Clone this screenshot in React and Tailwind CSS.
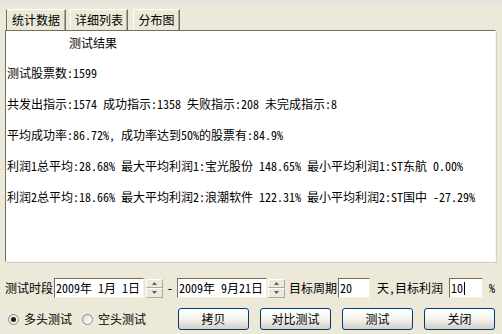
import React from "react";

const font = { fontFamily: '"Noto Sans Mono CJK SC", "Noto Sans CJK SC", monospace' };

const Tab = ({ label, active, w }) => (
  <div
    className={`h-[21px] ${w} shrink-0 flex items-center justify-center text-[12px] text-black bg-[#ece9d8] border border-t-white border-r-[#716f64] border-b-0 ${
      active ? "border-l-[#716f64]" : "border-l-white"
    } shadow-[inset_-1px_0_0_#aca899]`}
  >
    {label}
  </div>
);

const Spin = ({ ml }) => (
  <div className={`flex flex-col w-[17px] h-[19px] shrink-0 ${ml}`}>
    <div className="flex-1 flex items-center justify-center bg-[#ece9d8] border border-t-white border-l-white border-r-[#aca899] border-b-[#aca899]">
      <svg width="5" height="3" viewBox="0 0 5 3">
        <path d="M2.5 0 L5 3 L0 3 Z" fill="#4d6185" />
      </svg>
    </div>
    <div className="flex-1 flex items-center justify-center bg-[#ece9d8] border border-t-white border-l-white border-r-[#aca899] border-b-[#aca899]">
      <svg width="5" height="3" viewBox="0 0 5 3">
        <path d="M0 0 L5 0 L2.5 3 Z" fill="#4d6185" />
      </svg>
    </div>
  </div>
);

const Field = ({ w, children }) => (
  <div
    className={`${w} h-[20px] shrink-0 bg-white border border-t-[#716f64] border-l-[#716f64] border-r-[#f1efe2] border-b-[#f1efe2] flex items-center pl-[1px] text-[12px] leading-none whitespace-pre`}
  >
    {children}
  </div>
);

const Btn = ({ label }) => (
  <div className="w-[71px] h-[22px] shrink-0 rounded-[3px] border border-[#003c74] bg-gradient-to-b from-white via-[#f4f3ee] to-[#d6d0c5] flex items-center justify-center text-[12px] text-black">
    {label}
  </div>
);

const Radio = ({ checked }) => (
  <div className="w-[11px] h-[11px] shrink-0 rounded-full border border-[#8b8b86] bg-gradient-to-br from-[#dcdcd7] to-white flex items-center justify-center">
    {checked && <div className="w-[5px] h-[5px] rounded-full bg-[#1e1e1e]" />}
  </div>
);

const lines = [
  "测试股票数:1599",
  "共发出指示:1574 成功指示:1358 失败指示:208 未完成指示:8",
  "平均成功率:86.72%, 成功率达到50%的股票有:84.9%",
  "利润1总平均:28.68% 最大平均利润1:宝光股份 148.65% 最小平均利润1:ST东航 0.00%",
  "利润2总平均:18.66% 最大平均利润2:浪潮软件 122.31% 最小平均利润2:ST国中 -27.29%",
];

export default function App() {
  return (
    <div
      className="w-[502px] h-[334px] flex flex-col text-black overflow-hidden bg-gradient-to-b from-[#e3e3de] from-0% to-[#ece9d8] to-[3%]"
      style={font}
    >
      {/* tabs */}
      <div className="flex items-end pl-[6px] pt-[9px]">
        <Tab label="统计数据" active w="w-[60px]" />
        <div className="ml-[4px]">
          <Tab label="详细列表" w="w-[58px]" />
        </div>
        <div className="ml-[5px]">
          <Tab label="分布图" w="w-[47px]" />
        </div>
      </div>

      {/* result panel */}
      <div className="ml-[5px] w-[491px] h-[232px] bg-white border border-t-[#716f64] border-l-[#716f64] border-r-[#f8f7f0] border-b-[#f8f7f0] shadow-[1px_1px_0_#d4d0c8] pt-[5px] pl-[1px] text-[12px]">
        <div className="leading-[14px] h-[14px] mb-[16px] pl-[62px]">测试结果</div>
        {lines.map((l) => (
          <div key={l} className="leading-[14px] h-[14px] mb-[17px] whitespace-pre">
            {l}
          </div>
        ))}
      </div>

      {/* period row */}
      <div className="flex items-center h-[20px] mt-[16px] pl-[5px] text-[12px] whitespace-pre">
        <span className="shrink-0 mr-[1px]">测试时段</span>
        <Field w="w-[90px]">2009年 1月 1日</Field>
        <Spin ml="ml-[2px]" />
        <span className="shrink-0 ml-[4px] mr-[4px]">-</span>
        <Field w="w-[90px]">2009年 9月21日</Field>
        <Spin ml="ml-[1px]" />
        <span className="shrink-0 ml-[4px] mr-[1px]">目标周期</span>
        <Field w="w-[32px]">20</Field>
        <span className="shrink-0 ml-[7px] mr-[6px]">天,目标利润</span>
        <Field w="w-[34px]">
          10<span className="w-px h-[13px] bg-black ml-[1px]" />
        </Field>
        <span className="shrink-0 ml-[6px]">%</span>
      </div>

      {/* action row */}
      <div className="flex items-center h-[22px] mt-[10px] text-[12px]">
        <div className="flex items-center pl-[8px] w-[178px] shrink-0">
          <Radio checked />
          <span className="ml-[5px]">多头测试</span>
          <div className="ml-[10px]">
            <Radio />
          </div>
          <span className="ml-[5px]">空头测试</span>
        </div>
        <div className="flex gap-[11px]">
          <Btn label="拷贝" />
          <Btn label="对比测试" />
          <Btn label="测试" />
          <Btn label="关闭" />
        </div>
      </div>
    </div>
  );
}
